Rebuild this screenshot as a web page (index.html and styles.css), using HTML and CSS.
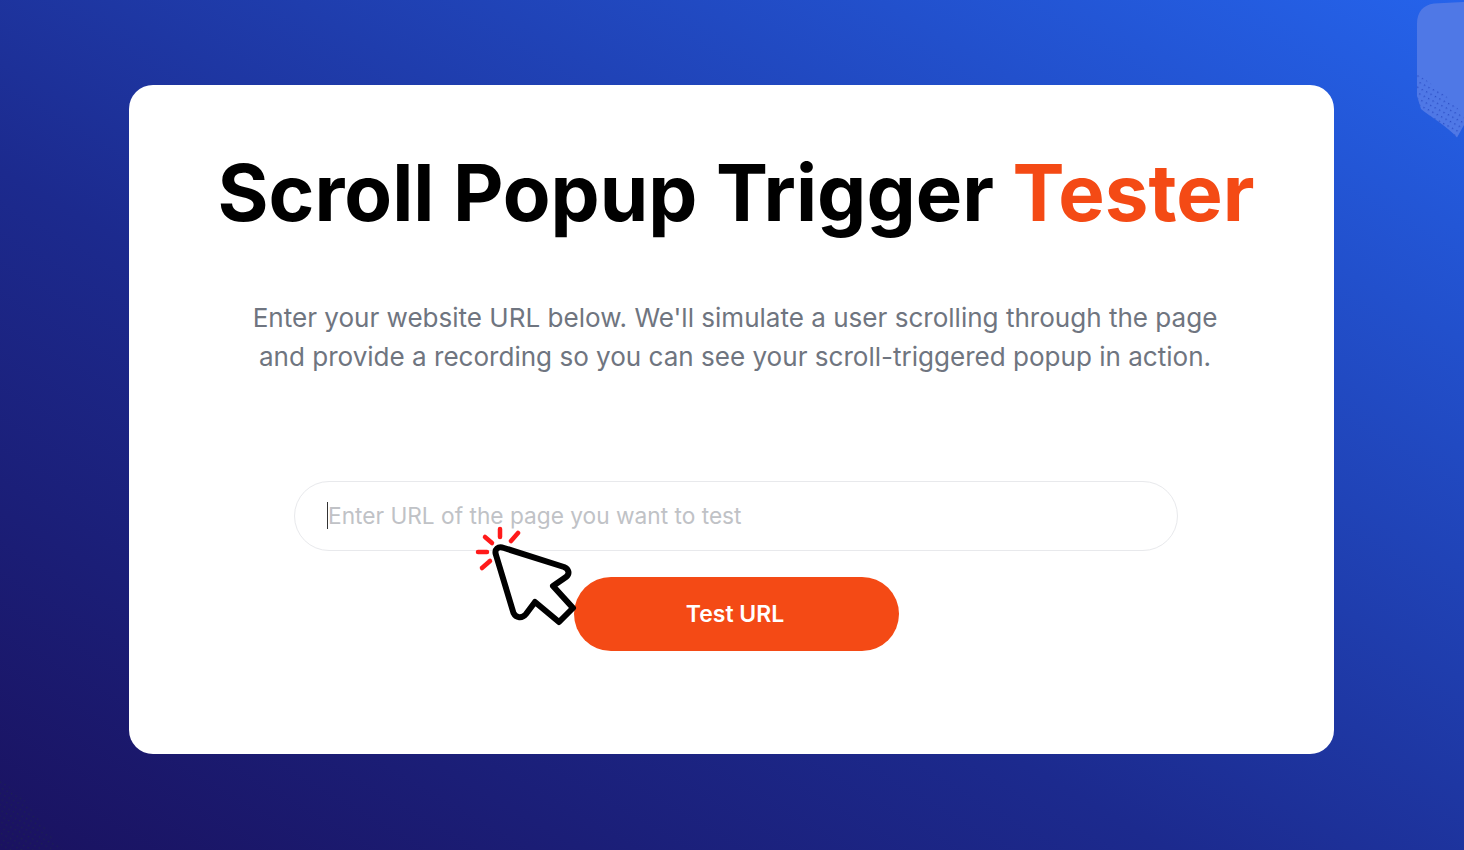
FILE: index.html
```html
<!DOCTYPE html>
<html lang="en">
<head>
<meta charset="utf-8">
<title>Scroll Popup Trigger Tester</title>
<link rel="stylesheet" href="styles.css">
</head>
<body>
<svg class="corner-shape" viewBox="0 0 47 138" aria-hidden="true">
  <defs>
    <pattern id="dots-light" width="5" height="5" patternUnits="userSpaceOnUse" patternTransform="rotate(28)">
      <rect x="1" y="1" width="1.300" height="1.300" fill="#2a4cc4"/>
    </pattern>
  </defs>
  <path d="M0 24C0 12 6 5 17 3.500L46 2L47 2V125L40 137.500C30 126 12 116 4 109L0 96Z" fill="#4f78e6"/>
  <path d="M0 74L12 82L30 97L46 114L47 125L40 137.500C30 126 12 116 4 109L0 96Z" fill="url(#dots-light)"/>
</svg>
<svg class="corner-dots" viewBox="0 0 70 70" aria-hidden="true">
  <defs>
    <pattern id="dots-dark" width="5" height="5" patternUnits="userSpaceOnUse" patternTransform="rotate(28)">
      <rect x="1" y="1" width="1.200" height="1.200" fill="#1b2150"/>
    </pattern>
  </defs>
  <path d="M0 0L20 14L62 70H0Z" fill="url(#dots-dark)"/>
</svg>
<main class="card">
  <h1 class="title">Scroll Popup Trigger <span class="accent">Tester</span></h1>
  <p class="lead">Enter your website URL below. We'll simulate a user scrolling through the page<br>and provide a recording so you can see your scroll-triggered popup in action.</p>
  <form class="form">
    <div class="field"><span class="caret"></span><span class="placeholder">Enter URL of the page you want to test</span></div>
    <button class="submit" type="button">Test URL</button>
  </form>
</main>
<svg class="pointer" viewBox="0 0 140 140" aria-hidden="true">
  <g stroke="#ff1a1a" stroke-width="4.500" stroke-linecap="round" fill="none">
    <path d="M40 29V37"/>
    <path d="M25 37L32 43"/>
    <path d="M51 41L58 33"/>
    <path d="M18 52H27"/>
    <path d="M22 68L30 61"/>
  </g>
  <path d="M36 55C34 49 38 46 44 48L104 67C109 69 110 74 106 77L93 86L113 108L99 122L75 102L66 114C62 119 56 118 53.500 113Z" fill="#fff" stroke="#000" stroke-width="6" stroke-linejoin="round"/>
</svg>
</body>
</html>
```
FILE: styles.css
```css
* { box-sizing: border-box; }
html, body { height: 100%; }
body {
  margin: 0;
  height: 850px;
  overflow: hidden;
  position: relative;
  display: flex;
  align-items: flex-start;
  justify-content: flex-start;
  padding: 85px 130px 0 129px;
  font-family: Inter, "Liberation Sans", sans-serif;
  background: linear-gradient(to top right, #1a1260 0%, #1c2a8e 40%, #2563eb 100%);
}
.card {
  width: 1205px;
  height: 669px;
  background: #fff;
  border-radius: 24px;
  padding: 64px 0 0 9px;
  display: flex;
  flex-direction: column;
  align-items: center;
}
.title {
  margin: 0;
  font-size: 78px;
  line-height: 88px;
  font-weight: 700;
  color: #000;
  white-space: nowrap;
}
.accent { color: #f44a15; }
.lead {
  margin: 61px 0 0;
  padding-right: 2px;
  font-size: 26.050px;
  line-height: 39px;
  color: #6f7580;
  text-align: center;
  white-space: nowrap;
}
.form {
  margin-top: 105px;
  display: flex;
  flex-direction: column;
  align-items: center;
  gap: 26px;
}
.field {
  width: 884px;
  height: 70px;
  border: 1px solid #e8e9ec;
  border-radius: 35px;
  padding: 0 0 2px 32px;
  display: flex;
  align-items: center;
  background: #fff;
}
.caret {
  width: 1px;
  height: 27px;
  background: #333;
  flex: none;
}
.placeholder {
  font-size: 22.700px;
  color: #c0c2c6;
  white-space: nowrap;
}
.submit {
  width: 325px;
  height: 74px;
  border: 0;
  border-radius: 37px;
  background: #f44a15;
  color: #fff;
  font: 600 23px Inter, "Liberation Sans", sans-serif;
  padding: 0 2px 0 0;
}
.corner-shape {
  position: absolute;
  top: 0;
  right: 0;
  width: 47px;
  height: 138px;
}
.corner-dots {
  position: absolute;
  left: 0;
  bottom: 0;
  width: 70px;
  height: 70px;
}
.pointer {
  position: absolute;
  left: 460px;
  top: 500px;
  width: 140px;
  height: 140px;
}
```
